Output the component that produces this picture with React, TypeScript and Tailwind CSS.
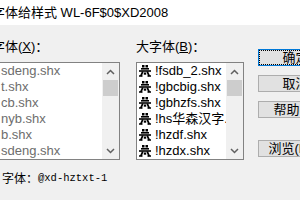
import type { ReactNode } from 'react'

const UI_FONT = { fontFamily: '"Liberation Sans", "Noto Sans CJK SC", sans-serif' }

const SMALL_FONTS = ['sdeng.shx', 't.shx', 'cb.shx', 'nyb.shx', 'b.shx', 'sdeng.shx']
const BIG_FONTS = ['!fsdb_2.shx', '!gbcbig.shx', '!gbhzfs.shx', '!hs华森汉字.shx', '!hzdf.shx', '!hzdx.shx']

function ShxIcon() {
  return (
    <svg width="12" height="12" viewBox="0 0 12 12" className="shrink-0">
      <path d="M3 0h2.5v2.5H3zM6.5 0H9v2.5H6.5z" fill="#000" />
      <path d="M2 3h8v1.6H2z" fill="#000" />
      <path d="M0 5.2h12v1.6H0z" fill="#000" />
      <path d="M3.8 6.5L1.8 11.2M8.2 6.5l2 4.7" stroke="#000" strokeWidth="1.8" fill="none" />
      <path d="M0 11h3.5M8.5 11H12" stroke="#000" strokeWidth="1.6" />
      <path d="M4.8 7.5h2.4v2.2H4.8z" fill="#000" />
    </svg>
  )
}

function Chevron({ down = false }: { down?: boolean }) {
  return (
    <svg width="9" height="6" viewBox="0 0 9 6">
      <path
        d={down ? 'M1 1l3.5 3.5L8 1' : 'M1 5l3.5-3.5L8 5'}
        stroke="#606060"
        strokeWidth="1.5"
        fill="none"
      />
    </svg>
  )
}

function ScrollBar() {
  return (
    <div className="w-[17px] shrink-0 bg-[#f0f0f0] flex flex-col">
      <div className="h-[17px] flex items-center justify-center">
        <Chevron />
      </div>
      <div className="h-[16px] mx-[1px] bg-[#cdcdcd]" />
      <div className="flex-1" />
      <div className="h-[17px] flex items-center justify-center">
        <Chevron down />
      </div>
    </div>
  )
}

function Label({ children }: { children: ReactNode }) {
  return <div className="h-[16px] leading-[16px] text-[13px] text-black whitespace-nowrap">{children}</div>
}

function Button({ children, focused = false }: { children: ReactNode; focused?: boolean }) {
  return (
    <div
      className={`w-[75px] h-[17px] shrink-0 flex items-center justify-center bg-[#e1e1e1] text-[13px] text-black border ${
        focused ? 'border-[#0078d7]' : 'border-[#adadad]'
      }`}
    >
      <div
        className={`w-full h-full flex items-center justify-center leading-none ${
          focused ? 'border border-dotted border-black' : ''
        }`}
      >
        {children}
      </div>
    </div>
  )
}

export default function App() {
  return (
    <div className="w-[300px] h-[200px] overflow-hidden bg-[#f0f0f0] flex flex-col" style={UI_FONT}>
      {/* Title bar */}
      <div className="h-[25px] shrink-0 bg-white flex items-center">
        <span className="ml-[-8px] text-[13px] text-black whitespace-nowrap leading-none">
          字体给样式 WL-6F$0$XD2008
        </span>
      </div>

      <div className="flex mt-[14px]">
        {/* Small fonts */}
        <div className="w-[140px] ml-[-20px] shrink-0 flex flex-col gap-[7px]">
          <Label>
            <span className="ml-[12px]">
              字体(<span className="underline">X</span>)：
            </span>
          </Label>
          <div className="h-[98px] border border-[#828282] bg-white flex">
            <div className="flex-1 flex flex-col overflow-hidden">
              {SMALL_FONTS.map((f, i) => (
                <div key={i} className="h-[16px] leading-[16px] text-[13px] text-[#6d6d6d] pl-[20px] whitespace-nowrap">
                  {f}
                </div>
              ))}
            </div>
            <ScrollBar />
          </div>
        </div>

        {/* Big fonts */}
        <div className="w-[108px] ml-[16px] shrink-0 flex flex-col gap-[7px]">
          <Label>
            大字体(<span className="underline">B</span>)：
          </Label>
          <div className="h-[98px] border border-[#828282] bg-white flex">
            <div className="flex-1 flex flex-col overflow-hidden">
              {BIG_FONTS.map((f) => (
                <div key={f} className="h-[16px] flex items-center gap-[4px] pl-[2px] text-[13px] text-black whitespace-nowrap">
                  <ShxIcon />
                  <span className="leading-[16px]">{f}</span>
                </div>
              ))}
            </div>
            <ScrollBar />
          </div>
        </div>

        {/* Buttons */}
        <div className="ml-[14px] mt-[10px] flex flex-col">
          <Button focused>确定</Button>
          <div className="h-[9px]" />
          <Button>取消</Button>
          <div className="h-[9px]" />
          <Button>帮助(H)</Button>
          <div className="h-[22px]" />
          <Button>浏览(B)...</Button>
        </div>
      </div>

      {/* Current font */}
      <div className="mt-[11px] ml-[2px] h-[16px] flex items-center whitespace-nowrap text-black">
        <span className="text-[12px]">字体：</span>
        <span className="text-[10.5px]" style={{ fontFamily: '"Liberation Mono", monospace' }}>
          @xd-hztxt-1
        </span>
      </div>
    </div>
  )
}
